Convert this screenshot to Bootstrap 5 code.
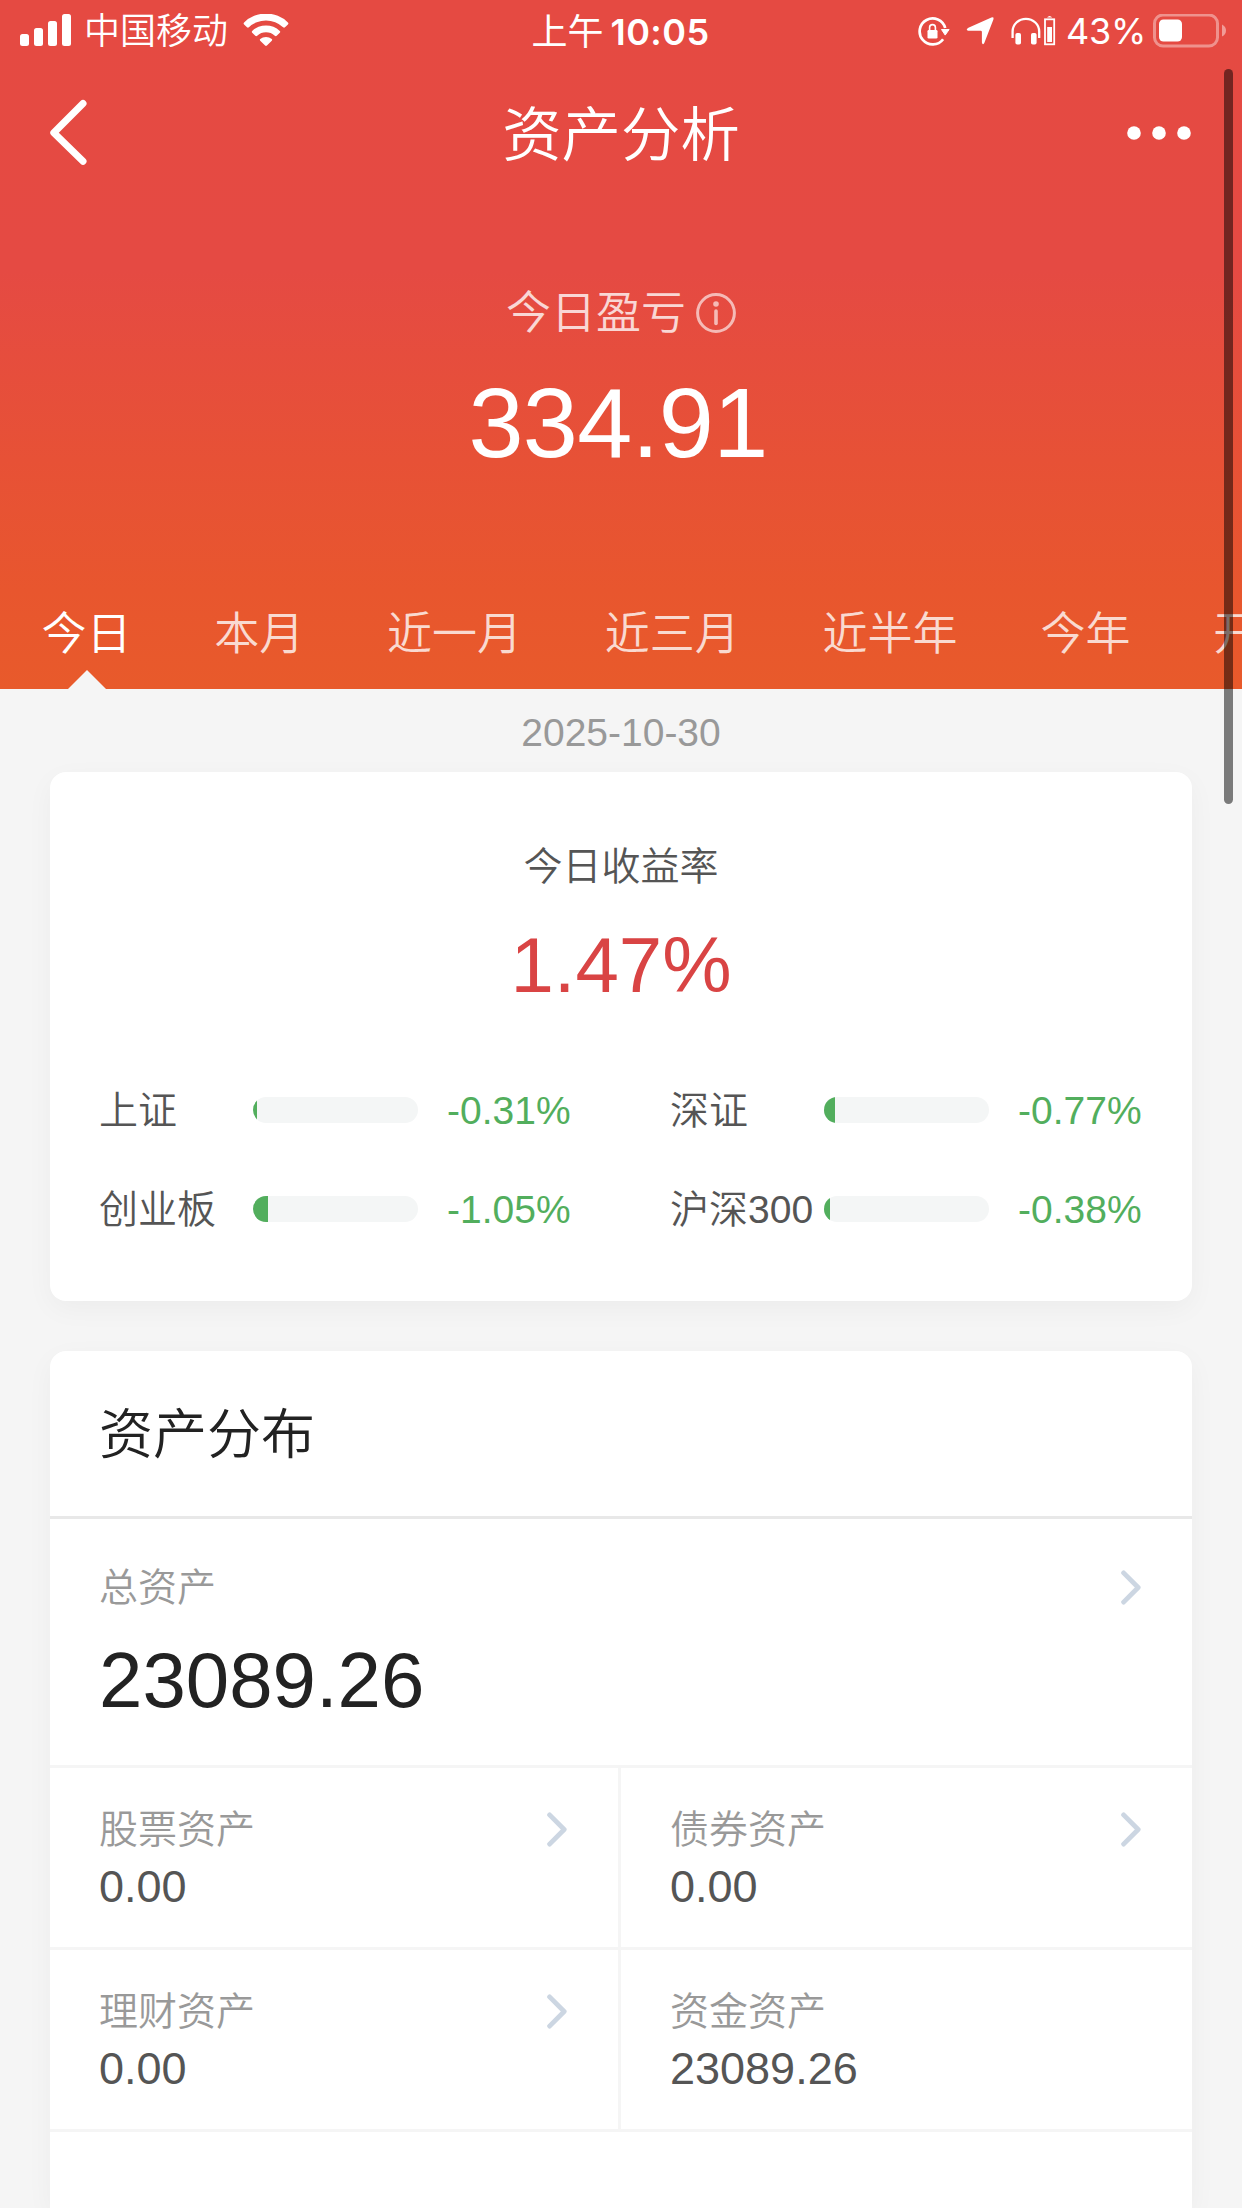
<!DOCTYPE html>
<html lang="zh-CN">
<head>
<meta charset="utf-8">
<meta name="viewport" content="width=device-width, initial-scale=1">
<title>资产分析</title>
<link href="https://cdn.jsdelivr.net/npm/bootstrap@5.3.0/dist/css/bootstrap.min.css" rel="stylesheet">
<style>
  body { background: #f5f5f5; font-family: "Liberation Sans", "Noto Sans CJK SC", sans-serif; font-weight: 350; color: #555; height: 2208px; overflow: hidden; }
  svg { display: block; flex: none; }
  .hero { height: 689px; color: #fff; background: linear-gradient(180deg, #e54a42 0, #e54a43 270px, #e75136 460px, #e8562e 590px, #e85a2b 100%); }
  .status { height: 62px; padding: 0 15px 0 20px; font-size: 36px; line-height: 62px; }
  .status-num { font-family: Inter, "Liberation Sans", sans-serif; }
  .carrier { margin: 2px 15px 0 13px; }
  .clock { font-weight: 400; margin-right: 6px; padding-top: 2px; }
  .clock .status-num { font-weight: 600; margin-left: -3px; letter-spacing: .4px; }
  .pct { font-weight: 400; margin: 0 7px 0 10px; letter-spacing: -.3px; }
  .side { flex: 1 1 0; }
  .topbar { height: 142px; padding: 0 50px; }
  .page-title { font-size: 59.4px; line-height: 142px; padding-top: 6px; font-weight: 350; }
  .pl-label { margin-top: 79px; height: 60px; font-size: 45px; line-height: 60px; gap: 10px; }
  .pl-label span { opacity: .78; padding-top: 2px; }
  .pl-value { margin-top: 30px; padding-right: 6px; font-size: 99px; line-height: 100px; letter-spacing: -.6px; }
  .period-tabs { height: 111px; margin-top: 105px; font-size: 45px; line-height: 111px; }
  .period-tabs .nav-link { color: rgba(255,255,255,.78); padding: 2px 41.4px 0; flex: none; position: relative; font-weight: 350; line-height: 109px; }
  .period-tabs .nav-link.active { color: #fff; }
  .period-tabs .nav-link.active::after { content: ""; position: absolute; bottom: 0; left: 50%; transform: translateX(-50%); margin-left: 1px; border: solid transparent; border-width: 0 19px 19px; border-bottom-color: #f5f5f5; }
  .report-date { height: 83px; padding-top: 4px; font-size: 39px; line-height: 79px; color: #999; }
  .panel { margin: 0 50px 50px; border: 0; border-radius: 16px; background: #fff; box-shadow: 0 8px 28px rgba(0,0,0,.04); --bs-card-color: #555; }
  .rate-panel { height: 529px; padding-top: 70px; }
  .t39 { font-size: 39px; line-height: 50px; }
  .t78 { font-size: 78px; line-height: 90px; }
  .rate { color: #d94444; margin-top: 28px; margin-bottom: 50px; }
  .index-item { height: 99px; padding: 0 50px; font-size: 39px; line-height: 50px; }
  .index-name { width: 154px; margin-left: -1px; padding-top: 2px; white-space: nowrap; }
  .index-bar { width: 165px; height: 26px; border-radius: 13px; background: #f4f6f6; }
  .index-bar .progress-bar { background: #52ae5d; }
  .index-change { color: #52ae5d; padding-top: 3px; margin-left: 29px; }
  .dist-panel { height: 857px; margin-bottom: 0; border-radius: 16px 16px 0 0; }
  .dist-head { height: 168px; border-bottom: 3px solid #e8e8e8; padding: 4px 49px 0; font-size: 54px; line-height: 161px; color: #222; font-weight: 350; margin: 0; }
  .total { height: 249px; padding: 43px 51px 0 49px; border-bottom: 3px solid #f5f5f5; }
  .total .t78 { margin-top: 22px; color: #222; }
  .muted { color: #999; }
  .muted span { padding-top: 1px; }
  .asset { height: 182px; padding: 36px 51px 0 49px; border-bottom: 3px solid #f5f5f5; }
  .asset-l { border-right: 3px solid #f5f5f5; }
  .asset-val { margin-top: 7px; font-size: 45px; line-height: 50px; }
  .scroll-thumb { position: fixed; left: 1224px; top: 69px; width: 9px; height: 735px; border-radius: 5px; background: rgba(0,0,0,.5); z-index: 10; }
</style>
</head>
<body>
<svg class="d-none">
  <symbol id="chev" viewBox="0 0 20 36"><path d="M2.6 2.9 17.2 17.5 2.6 32.1" fill="none" stroke="#ccd6e2" stroke-width="4.8" stroke-linecap="round" stroke-linejoin="round"/></symbol>
</svg>
<div class="scroll-thumb"></div>
<header class="hero d-flex flex-column">
  <div class="status d-flex align-items-center">
    <div class="side d-flex align-items-center">
      <svg width="51" height="34" viewBox="0 0 51 34" fill="#fff"><rect x="0" y="20" width="9" height="12" rx="2.5"/><rect x="14" y="14" width="9" height="18" rx="2.5"/><rect x="28" y="7" width="9" height="25" rx="2.5"/><rect x="42" y="0" width="9" height="32" rx="2.5"/></svg>
      <span class="carrier">中国移动</span>
      <svg width="46" height="34" viewBox="0 1 46 34" fill="#fff"><path d="M1.1 9.4a31.5 31.5 0 0 1 43.8 0q1 1 0 2l-2.9 2.9q-.9.9-1.9 0a24.8 24.8 0 0 0-34.2 0q-1 .9-1.9 0L1.1 11.4q-1-1 0-2Z"/><path d="M9.2 17.9a20 20 0 0 1 27.6 0q.9.9 0 1.8l-3.1 3.1q-.9.8-1.9 0a13 13 0 0 0-17.6 0q-1 .8-1.9 0l-3.1-3.1q-.9-.9 0-1.8Z"/><path d="M17.2 26a9 9 0 0 1 11.6 0q.9.8 0 1.7l-4.9 4.9q-.9.8-1.8 0l-4.9-4.9q-.9-.9 0-1.7Z"/></svg>
    </div>
    <div class="clock">上午 <span class="status-num">10:05</span></div>
    <div class="side d-flex align-items-center justify-content-end">
      <svg width="138" height="34" viewBox="0 0 138 34" fill="#fff">
        <path d="M25.1 25.2A13 13 0 1 1 27.2 14" fill="none" stroke="#fff" stroke-width="2.7"/>
        <path d="M23.5 15.5h7.6l-3.9 5.6Z" stroke="#fff" stroke-width="1" stroke-linejoin="round"/>
        <rect x="9.5" y="16" width="10" height="8.600" rx="1.300"/><path d="M11.600 17v-3.500a2.900 2.900 0 0 1 5.800 0V17" fill="none" stroke="#fff" stroke-width="1.600"/>
        <path d="M50.400 13.800 73.400 3.600q3-1 2 2L66.300 29q-1.700 2.600-2.400-.5V18q0-1.200-1.200-1.200H50.200q-3-.8.200-3Z"/>
        <path d="M94.600 24v-6.500a13.200 12.600 0 0 1 26.600 0V24" fill="none" stroke="#fff" stroke-width="2.300"/>
        <rect x="97.400" y="19" width="5.600" height="11.500" rx="1.800"/><rect x="113" y="19" width="5.600" height="11.500" rx="1.800"/>
        <rect x="127" y="5.300" width="9.200" height="25" fill="none" stroke="#fff" stroke-width="1.800"/><path d="M129 3.600q2.600-3 5.200 0Z"/><rect x="129.200" y="13" width="4.800" height="15"/>
      </svg>
      <span class="status-num pct">43%</span>
      <svg width="74" height="34" viewBox="0 1 74 34"><rect x="1.5" y="2" width="63" height="31" rx="8.500" fill="none" stroke="#fff" stroke-opacity=".4" stroke-width="3"/><rect x="6" y="6.500" width="23" height="22" rx="4.500" fill="#fff"/><path d="M69 11.500q4 2 4 6t-4 6Z" fill="#fff" fill-opacity=".45"/></svg>
    </div>
  </div>
  <nav class="topbar d-flex align-items-center">
    <div class="side"><svg width="38" height="68" viewBox="0 0 38 68"><path d="M33 4.500 3.800 33.700 33 62.300" fill="none" stroke="#fff" stroke-width="7" stroke-linecap="round" stroke-linejoin="round"/></svg></div>
    <h1 class="page-title m-0">资产分析</h1>
    <div class="side d-flex justify-content-end"><svg width="65" height="14" viewBox="0 0 65 14" fill="#fff"><circle cx="7" cy="7" r="6.800"/><circle cx="32" cy="7" r="6.800"/><circle cx="57" cy="7" r="6.800"/></svg></div>
  </nav>
  <div class="pl-label d-flex justify-content-center align-items-center">
    <span>今日盈亏</span>
    <svg width="40" height="40" viewBox="0 0 40 40" opacity=".62"><circle cx="20" cy="20" r="18.400" fill="none" stroke="#fff" stroke-width="3"/><circle cx="20" cy="11" r="2.800" fill="#fff"/><path d="M20 18v12.500" stroke="#fff" stroke-width="3.600" stroke-linecap="round"/></svg>
  </div>
  <div class="pl-value text-center">334.91</div>
  <ul class="nav period-tabs flex-nowrap overflow-hidden">
    <li class="nav-item flex-shrink-0"><a class="nav-link active">今日</a></li>
    <li class="nav-item flex-shrink-0"><a class="nav-link">本月</a></li>
    <li class="nav-item flex-shrink-0"><a class="nav-link">近一月</a></li>
    <li class="nav-item flex-shrink-0"><a class="nav-link">近三月</a></li>
    <li class="nav-item flex-shrink-0"><a class="nav-link">近半年</a></li>
    <li class="nav-item flex-shrink-0"><a class="nav-link">今年</a></li>
    <li class="nav-item flex-shrink-0"><a class="nav-link pe-0">开</a></li>
  </ul>
</header>
<main>
  <div class="report-date text-center">2025-10-30</div>
  <section class="card panel rate-panel">
    <div class="t39 text-center">今日收益率</div>
    <div class="t78 text-center rate">1.47%</div>
    <div class="row g-0">
      <div class="col-6 index-item d-flex align-items-center"><span class="index-name">上证</span><div class="progress index-bar"><div class="progress-bar" style="width:2.4%"></div></div><span class="index-change">-0.31%</span></div>
      <div class="col-6 index-item d-flex align-items-center"><span class="index-name">深证</span><div class="progress index-bar"><div class="progress-bar" style="width:6.7%"></div></div><span class="index-change">-0.77%</span></div>
      <div class="col-6 index-item d-flex align-items-center"><span class="index-name">创业板</span><div class="progress index-bar"><div class="progress-bar" style="width:9.1%"></div></div><span class="index-change">-1.05%</span></div>
      <div class="col-6 index-item d-flex align-items-center"><span class="index-name">沪深300</span><div class="progress index-bar"><div class="progress-bar" style="width:3.6%"></div></div><span class="index-change">-0.38%</span></div>
    </div>
  </section>
  <section class="card panel dist-panel">
    <h2 class="dist-head">资产分布</h2>
    <div class="total">
      <div class="t39 muted d-flex justify-content-between align-items-center"><span>总资产</span><svg width="20" height="36"><use href="#chev"/></svg></div>
      <div class="t78">23089.26</div>
    </div>
    <div class="row g-0">
      <div class="col-6 asset asset-l"><div class="t39 muted d-flex justify-content-between align-items-center"><span>股票资产</span><svg width="20" height="36"><use href="#chev"/></svg></div><div class="asset-val">0.00</div></div>
      <div class="col-6 asset"><div class="t39 muted d-flex justify-content-between align-items-center"><span>债券资产</span><svg width="20" height="36"><use href="#chev"/></svg></div><div class="asset-val">0.00</div></div>
      <div class="col-6 asset asset-l"><div class="t39 muted d-flex justify-content-between align-items-center"><span>理财资产</span><svg width="20" height="36"><use href="#chev"/></svg></div><div class="asset-val">0.00</div></div>
      <div class="col-6 asset"><div class="t39 muted d-flex"><span>资金资产</span></div><div class="asset-val">23089.26</div></div>
    </div>
  </section>
</main>
<script src="https://cdn.jsdelivr.net/npm/bootstrap@5.3.0/dist/js/bootstrap.bundle.min.js"></script>
</body>
</html>
